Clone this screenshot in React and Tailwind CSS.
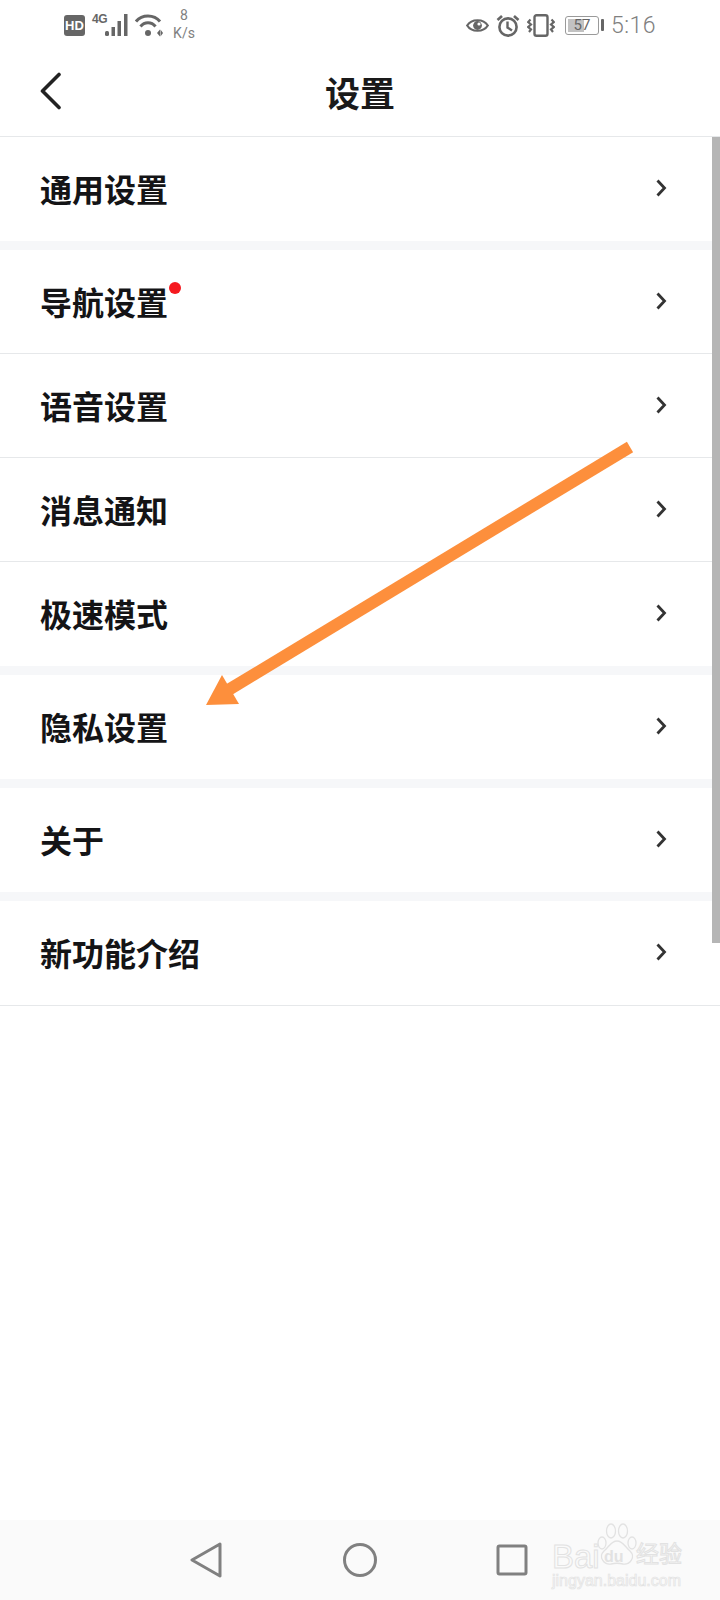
import React from 'react';

const CJK = "font-['Noto_Sans_CJK_SC','Noto_Sans',sans-serif]";

const groups = [
  [{ label: '通用设置' }],
  [{ label: '导航设置', dot: true }, { label: '语音设置' }, { label: '消息通知' }, { label: '极速模式' }],
  [{ label: '隐私设置' }],
  [{ label: '关于' }],
  [{ label: '新功能介绍' }],
];

// Status bar, left side
const HdBadge = () => (
  <div className="w-[21px] h-[21px] mt-[1px] rounded-[3px] bg-[#666666] flex items-center justify-center text-white text-[13px] font-bold leading-none font-['Liberation_Sans',sans-serif]">
    HD
  </div>
);

const SignalIcon = () => (
  <div className="relative w-[37px] h-[24px] ml-[7px]">
    <span className="absolute left-0 top-[1px] text-[12px] font-bold leading-[10px] text-[#666666] font-['Liberation_Sans',sans-serif] tracking-[-0.5px]">4G</span>
    <svg className="absolute left-0 top-0" width="37" height="24" viewBox="0 0 37 24" fill="#666666">
      <rect x="13" y="18" width="4" height="5" rx="1.5" />
      <rect x="19.5" y="14" width="3.5" height="9" />
      <rect x="25.5" y="8" width="3.5" height="15" />
      <rect x="32" y="1" width="3.5" height="22" />
    </svg>
  </div>
);

const WifiIcon = () => (
  <svg className="ml-[6px]" width="28" height="24" viewBox="0 0 28 24" fill="none" stroke="#666666" strokeWidth="3">
    <path d="M1 8.5 C7 1 19 1 25 8.5" />
    <path d="M5.5 13.5 C9.5 8.5 16.5 8.5 20.5 13.5" />
    <circle cx="13" cy="20" r="3" fill="#666666" stroke="none" />
    <path d="M22 20 l3 -3.5 v7 z" fill="#666666" stroke="none" />
    <path d="M28 20 l-2.5 -3.5 v7 z" fill="#666666" stroke="none" />
  </svg>
);

const EyeIcon = () => (
  <svg width="23" height="17" viewBox="0 0 23 17" fill="none" stroke="#666666" strokeWidth="2.2">
    <path d="M1.2 8.5 C5.5 1.5 17.5 1.5 21.8 8.5 C17.5 15.5 5.5 15.5 1.2 8.5 Z" />
    <circle cx="11.5" cy="8.5" r="4.4" fill="#666666" stroke="none" />
    <circle cx="13" cy="7" r="1.6" fill="#ffffff" stroke="none" />
  </svg>
);

const AlarmIcon = () => (
  <svg width="24" height="23" viewBox="0 0 24 23" fill="none" stroke="#666666" strokeWidth="2.6">
    <circle cx="12" cy="13" r="8.6" />
    <path d="M11.5 7.5 v6 l4.5 3" strokeWidth="2.4" />
    <path d="M1.5 6 L6 2" />
    <path d="M22.5 6 L18 2" />
  </svg>
);

const VibrateIcon = () => (
  <svg width="28" height="23" viewBox="0 0 28 23" fill="none" stroke="#666666">
    <rect x="7.5" y="1.2" width="13" height="20.6" rx="2" strokeWidth="2.4" />
    <path d="M3.5 5.5 L1.2 8 L4 10.5 L1.2 13 L4 15.5 L2 18" strokeWidth="2.2" />
    <path d="M24.5 5.5 L26.8 8 L24 10.5 L26.8 13 L24 15.5 L26 18" strokeWidth="2.2" />
  </svg>
);

const Battery = () => (
  <div className="flex items-center ml-[10px]">
    <div className="relative w-[34px] h-[19px] rounded-[3px] border border-[#9a9a9a] p-[2px] overflow-hidden">
      <div className="w-[57%] h-full bg-[#c2c2c2]" />
      <span className="absolute inset-0 flex items-center justify-center text-[15px] leading-none text-[#666666] font-['Roboto',sans-serif]">57</span>
    </div>
    <div className="w-[3px] h-[12px] ml-[2px] bg-[#666666] rounded-[1px]" />
  </div>
);

const StatusBar = () => (
  <div className="h-[50px] flex items-center pl-[64px] pr-[64px] font-['Roboto',sans-serif]">
    <HdBadge />
    <SignalIcon />
    <WifiIcon />
    <div className="ml-[7px] w-[28px] mt-[-2px] flex flex-col items-center text-[#808080] text-[14px] leading-[18px]">
      <span>8</span>
      <span>K/s</span>
    </div>
    <div className="ml-auto flex items-center">
      <EyeIcon />
      <div className="ml-[7px] flex"><AlarmIcon /></div>
      <div className="ml-[7px] flex"><VibrateIcon /></div>
      <Battery />
      <span className="ml-[7px] text-[23px] leading-none text-[#808080] font-light tracking-[0.5px]">5:16</span>
    </div>
  </div>
);

const Header = () => (
  <div className="relative h-[87px] flex items-center justify-center border-b border-[#e6e8ea] bg-white">
    <svg className="absolute left-[39px] top-[22px]" width="24" height="38" viewBox="0 0 24 38" fill="none" stroke="#222222" strokeWidth="3.6" strokeLinecap="round" strokeLinejoin="round">
      <path d="M20 2.5 L3.5 19 L20 35.5" />
    </svg>
    <h1 className={`${CJK} mt-[-3px] text-[35px] font-bold text-[#1a1a1a] leading-none`}>设置</h1>
  </div>
);

const Row = ({ label, dot }) => (
  <div className="h-[104px] flex items-center justify-between pl-[40px] pr-[53px] border-b border-[#e6e8ea] last:border-b-0">
    <div className="relative mt-[2px]">
      <span className={`${CJK} text-[32px] leading-none font-bold text-[#141416]`}>{label}</span>
      {dot && <span className="absolute right-[-13px] top-[-3px] w-[12px] h-[12px] rounded-full bg-[#f5191f]" />}
    </div>
    <svg className="mt-[-2px]" width="12" height="20" viewBox="0 0 12 20" fill="none" stroke="#333333" strokeWidth="2.8">
      <path d="M2.5 2.5 L9.5 10 L2.5 17.5" />
    </svg>
  </div>
);

const Arrow = () => (
  <svg className="absolute left-0 top-0 pointer-events-none" width="720" height="760" viewBox="0 0 720 760" fill="none">
    <path d="M630 447 L225 692" stroke="#fd8f3c" strokeWidth="12" />
    <path d="M206 705 L222 675 L239 704 Z" fill="#fd8f3c" />
  </svg>
);

const NavBar = () => (
  <div className="mt-auto h-[80px] bg-[#fafafa] flex items-center pl-[190px]">
    <svg width="33" height="36" viewBox="0 0 33 36" fill="none" stroke="#808080" strokeWidth="3" strokeLinejoin="round">
      <path d="M30 2 L2 18 L30 34 Z" />
    </svg>
    <svg className="ml-[120px]" width="34" height="36" viewBox="0 0 34 36" fill="none" stroke="#808080" strokeWidth="3">
      <circle cx="17" cy="18" r="15.5" />
    </svg>
    <svg className="ml-[119px]" width="32" height="32" viewBox="0 0 32 32" fill="none" stroke="#808080" strokeWidth="3" strokeLinejoin="round">
      <rect x="2" y="2" width="28" height="28" rx="1.5" />
    </svg>
  </div>
);

// Baidu jingyan watermark, bottom right corner
const Watermark = () => (
  <div className="absolute left-[552px] top-[1520px] w-[130px] h-[72px] pointer-events-none">
    <svg className="absolute left-[44px] top-[3px]" width="42" height="43" viewBox="0 0 42 43" fill="#fafafa" stroke="#e2e2e2" strokeWidth="1.3">
      <ellipse cx="6" cy="20" rx="4" ry="6" />
      <ellipse cx="15" cy="8" rx="4.5" ry="7" />
      <ellipse cx="27" cy="8" rx="4.5" ry="7" />
      <ellipse cx="36" cy="20" rx="4" ry="6" />
      <path d="M21 18 C15 18 13 24 8 28 C2 34 8 42 15 41 C19 40 23 40 27 41 C34 42 40 34 34 28 C29 24 27 18 21 18 Z" />
    </svg>
    <span className="absolute left-0 top-[20px] text-[33px] leading-none text-transparent [-webkit-text-stroke:1px_#e2e2e2] font-['Liberation_Sans',sans-serif]">Bai</span>
    <span className="absolute left-[52px] top-[29px] text-[16px] leading-none font-bold text-[#e2e2e2] font-['Liberation_Sans',sans-serif]">du</span>
    <span className={`${CJK} absolute left-[84px] top-[21px] text-[23px] leading-none text-transparent [-webkit-text-stroke:1px_#e2e2e2]`}>经验</span>
    <span className="absolute left-0 top-[53px] text-[16px] leading-none text-transparent [-webkit-text-stroke:0.7px_#e2e2e2] font-['Liberation_Sans',sans-serif]">jingyan.baidu.com</span>
  </div>
);

export default function App() {
  return (
    <div className="relative w-[720px] h-[1600px] bg-white flex flex-col overflow-hidden">
      <StatusBar />
      <Header />
      <div className="flex flex-col gap-[9px] bg-[#f6f7f9]">
        {groups.map((rows, i) => (
          <div key={i} className="bg-white">
            {rows.map((row) => (
              <Row key={row.label} {...row} />
            ))}
          </div>
        ))}
      </div>
      <div className="h-px bg-[#e6e8ea]" />
      <NavBar />
      {/* scrollbar */}
      <div className="absolute right-0 top-[137px] w-[8px] h-[806px] bg-[#b5b5b5]" />
      <Arrow />
      <Watermark />
    </div>
  );
}
